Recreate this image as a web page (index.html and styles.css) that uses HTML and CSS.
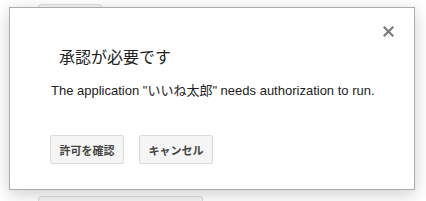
FILE: index.html
```html
<!DOCTYPE html>
<html lang="ja">
<head>
    <meta charset="UTF-8">
    <title>承認が必要です</title>
    <link rel="stylesheet" href="styles.css">
</head>
<body>

    <div class="page">
        <div class="bg-button top"></div>
        <div class="bg-button bottom"></div>
    </div>

    <div class="dialog">
        <button class="close" aria-label="閉じる">
            <svg width="11" height="11" viewBox="0 0 11 11">
                <path d="M1.5 1.5 L9.5 9.5 M9.5 1.5 L1.5 9.5" stroke="#7a7a7a" stroke-width="2.2" stroke-linecap="square"/>
            </svg>
        </button>
        <h2 class="title">承認が必要です</h2>
        <p class="message">The application "いいね太郎" needs authorization to run.</p>
        <div class="buttons">
            <button class="button">許可を確認</button>
            <button class="button">キャンセル</button>
        </div>
    </div>

</body>
</html>
```

FILE: styles.css
```css
body {
    margin: 0;
    background: #fff;
    font-family: Arial, "Liberation Sans", "Noto Sans CJK JP", sans-serif;
}

.page {
    display: flex;
    flex-direction: column;
    padding: 4px 0 0 38px;
    height: 197px;
    overflow: hidden;
}

.bg-button {
    flex-shrink: 0;
    border: 1px solid #dcdcdc;
    border-radius: 3px;
    background: #f5f5f5;
    height: 28px;
}

.bg-button.top { width: 62px; }
.bg-button.bottom { width: 163px; margin-top: 162px; }

.dialog {
    position: absolute;
    top: 7px;
    left: 9px;
    width: 404px;
    height: 181px;
    background: #fff;
    border: 1px solid #acacac;
    box-shadow: 0 4px 16px rgba(0, 0, 0, 0.2);
}

.close {
    position: absolute;
    top: 18px;
    right: 20px;
    width: 11px;
    height: 11px;
    padding: 0;
    border: none;
    background: none;
    display: flex;
}

.title {
    margin: 40px 0 0 49px;
    font-size: 16px;
    line-height: 20px;
    font-weight: normal;
    color: #222;
}

.message {
    margin: 15px 0 0 41px;
    font-size: 13px;
    line-height: 16px;
    color: #222;
}

.buttons {
    display: flex;
    gap: 15px;
    margin: 36px 0 0 40px;
}

.button {
    height: 29px;
    padding: 0 8px;
    min-width: 74px;
    border: 1px solid #dcdcdc;
    border-radius: 2px;
    background: #f5f5f5;
    color: #444;
    font-family: Arial, "Liberation Sans", "Noto Sans CJK JP", sans-serif;
    font-size: 11px;
    font-weight: bold;
}
```
